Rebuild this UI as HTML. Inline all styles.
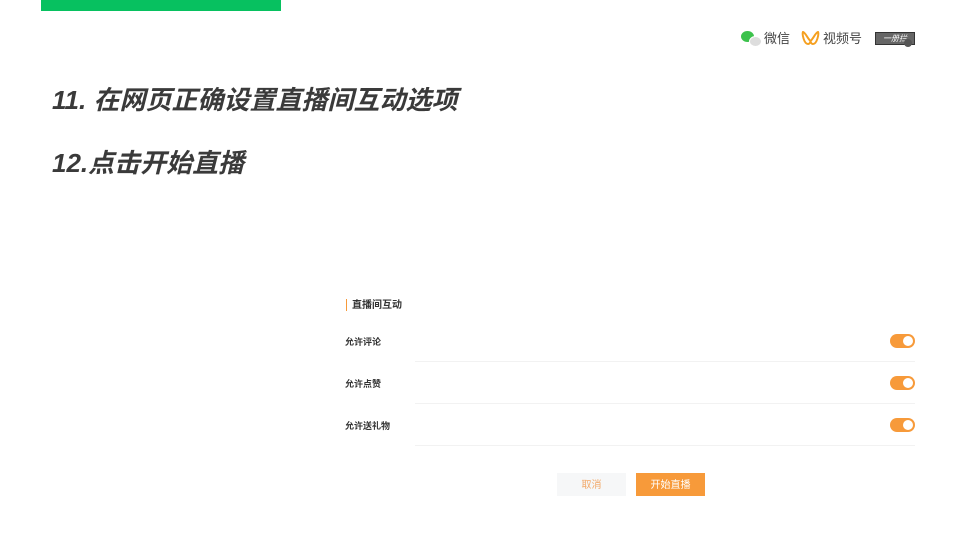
<!DOCTYPE html>
<html><head><meta charset="utf-8"><style>
body{margin:0;width:960px;height:540px;background:#fff;position:relative;overflow:hidden;font-family:"Liberation Sans","Noto Sans CJK SC",sans-serif}
.a{position:absolute}
.t{font-size:26px;font-weight:bold;font-style:italic;color:#3a3a3a;white-space:nowrap;line-height:30px}
.s{font-size:9px;font-weight:bold;color:#333;line-height:10px}
.tg{width:25px;height:14px;border-radius:7px;background:#f79a3a}
.tg:after{content:"";position:absolute;right:2px;top:2px;width:10px;height:10px;border-radius:50%;background:#fff}
.ln{height:1px;background:#f2f2f2;left:415px;width:500px}
</style></head><body>
<div class="a" style="left:41px;top:0;width:240px;height:11px;background:#07c160"></div>
<div class="a" style="left:741px;top:31px;width:20px;height:16px">
<div class="a" style="left:0;top:0;width:13px;height:11px;border-radius:50%;background:#3cc24c"></div>
<div class="a" style="left:8px;top:5px;width:11px;height:9px;border-radius:50%;background:#ddd;border:1px solid #fff"></div></div>
<div class="a" style="left:764px;top:30px;font-size:13px;color:#444;line-height:17px">微信</div>
<svg class="a" style="left:801px;top:30px" width="19" height="16" viewBox="0 0 19 16"><path d="M2 2 C4 2 7 9 9.5 11 C12 9 15 2 17 2 C18 4 16 14 12 14 C10 14 9.5 11 9.5 11 C9.5 11 9 14 7 14 C3 14 1 4 2 2Z" fill="none" stroke="#f5a020" stroke-width="2"/></svg>
<div class="a" style="left:823px;top:30px;font-size:13px;color:#444;line-height:17px">视频号</div>
<div class="a" style="left:875px;top:32px;width:38px;height:11px;background:#666;border:1px solid #333;color:#fff;font-size:8px;font-style:italic;line-height:11px;text-align:center">一册拦</div>
<div class="a" style="left:904px;top:39px;width:8px;height:8px;border-radius:50%;background:#555"></div>
<div class="a t" style="left:52px;top:85px">11. 在网页正确设置直播间互动选项</div>
<div class="a t" style="left:52px;top:148px">12.点击开始直播</div>
<div class="a" style="left:346px;top:299px;width:1px;height:12px;background:#f79a3a"></div>
<div class="a" style="left:352px;top:300px;font-size:10px;font-weight:bold;color:#333;line-height:12px">直播间互动</div>
<div class="a s" style="left:345px;top:337px">允许评论</div>
<div class="a tg" style="left:890px;top:334px"></div>
<div class="a ln" style="top:361px"></div>
<div class="a s" style="left:345px;top:379px">允许点赞</div>
<div class="a tg" style="left:890px;top:376px"></div>
<div class="a ln" style="top:403px"></div>
<div class="a s" style="left:345px;top:421px">允许送礼物</div>
<div class="a tg" style="left:890px;top:418px"></div>
<div class="a ln" style="top:445px"></div>
<div class="a" style="left:557px;top:473px;width:69px;height:23px;background:#f6f7f8;color:#f2a868;font-size:10px;line-height:26px;text-align:center">取消</div>
<div class="a" style="left:636px;top:473px;width:69px;height:23px;background:#f79a3a;color:#fff;font-size:10px;line-height:26px;text-align:center">开始直播</div>
</body></html>
